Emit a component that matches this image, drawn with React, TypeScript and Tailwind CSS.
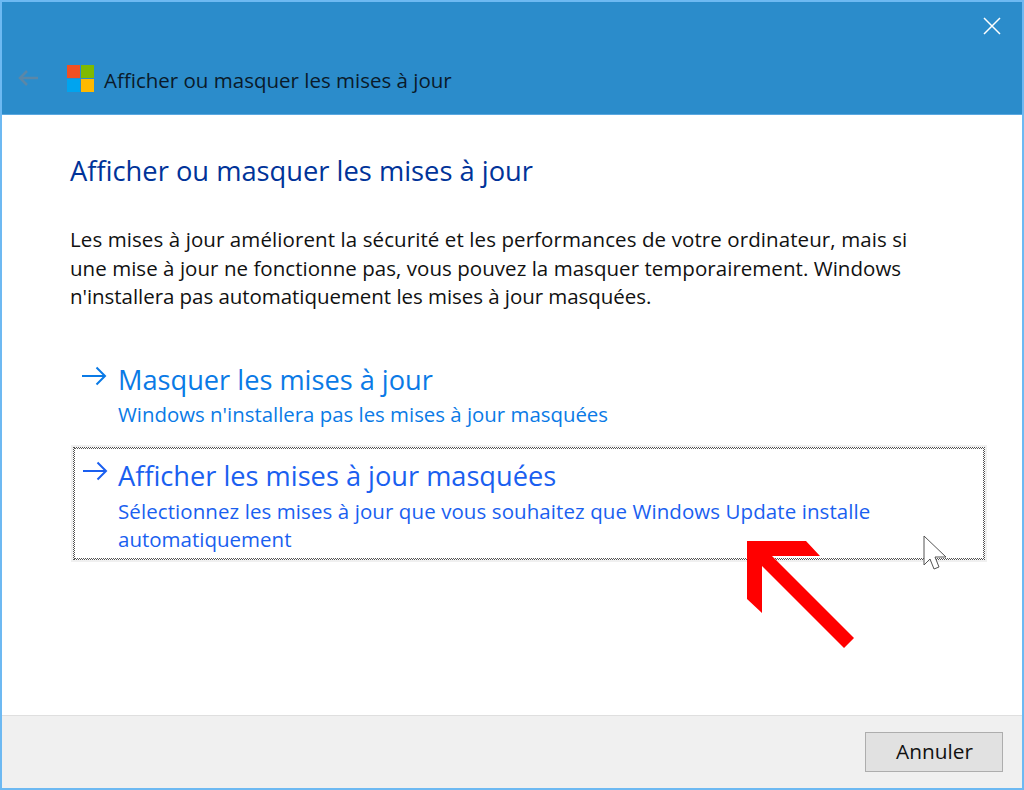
const font = "font-['Open_Sans','Noto_Sans',sans-serif]";

function LinkArrow({ className }: { className: string }) {
  return (
    <svg width="26" height="20" viewBox="0 0 26 20" fill="none" stroke="currentColor" strokeWidth="2" className={className}>
      <path d="M1 10h23M15.500 1.500 24 10l-8.500 8.500" />
    </svg>
  );
}

function WindowsLogo() {
  return (
    <div className="grid h-[27px] w-[27px] grid-cols-2 gap-[1px]">
      <div className="bg-[#f25022]" />
      <div className="bg-[#7fba00]" />
      <div className="bg-[#00a4ef]" />
      <div className="bg-[#ffb900]" />
    </div>
  );
}

export default function App() {
  return (
    <div className={`${font} relative flex h-[790px] w-[1024px] flex-col overflow-hidden border-2 border-[#6db9f2] bg-white`}>
      {/* Title bar */}
      <div className="relative flex h-[113px] shrink-0 items-start border-b border-[#5ba8e0] bg-[#2b8ccb] pl-[15px] pt-[63px]">
        <svg width="22" height="18" viewBox="0 0 22 18" fill="none" stroke="#5a87a8" strokeWidth="2.500" className="mt-[4px]">
          <path d="M21 9H3M10 2 3 9l7 7" />
        </svg>
        <div className="ml-[28px]"><WindowsLogo /></div>
        <span className="ml-[10px] mt-[2px] whitespace-nowrap text-[20.500px] leading-[27px] text-[#0a1a2a]">Afficher ou masquer les mises à jour</span>
        <svg width="18" height="18" viewBox="0 0 18 18" stroke="#ffffff" strokeWidth="1.500" className="absolute right-[21px] top-[15px]">
          <path d="M1 1l16 16M17 1 1 17" />
        </svg>
      </div>

      {/* Content */}
      <div className="flex flex-1 flex-col pl-[68px] pr-[36px] pt-[38px]">
        <h1 className="whitespace-nowrap text-[27.300px] leading-[36px] font-normal text-[#003399]">Afficher ou masquer les mises à jour</h1>
        <p className="mt-[36px] text-[20.500px] leading-[28.500px] text-[#111111]">
          <span className="block whitespace-nowrap tracking-[0.090px]">Les mises à jour améliorent la sécurité et les performances de votre ordinateur, mais si</span>
          <span className="block whitespace-nowrap tracking-[0.040px]">une mise à jour ne fonctionne pas, vous pouvez la masquer temporairement. Windows</span>
          <span className="block whitespace-nowrap tracking-[-0.050px]">n'installera pas automatiquement les mises à jour masquées.</span>
        </p>

        <div className="mt-[51px] flex pl-[11px] text-[#0a7ae6]">
          <LinkArrow className="mt-[4px] shrink-0" />
          <div className="ml-[11px]">
            <div className="whitespace-nowrap text-[27.200px] leading-[36px]">Masquer les mises à jour</div>
            <div className="mt-[2px] whitespace-nowrap text-[20.400px] leading-[28px]">Windows n'installera pas les mises à jour masquées</div>
          </div>
        </div>

        {/* Focus box: two nested 1px dotted borders give the dithered line */}
        <div className="ml-[1px] mt-[17px] w-[916px] border-2 border-[#f0f0f0]">
          <div className="border border-dotted border-[#555555]">
            <div className="flex h-[111px] border border-dotted border-[#555555] pl-[7px] pt-[9px] text-[#1a5ff0]">
              <LinkArrow className="mt-[3px] shrink-0" />
              <div className="ml-[10px]">
                <div className="whitespace-nowrap text-[27.200px] leading-[36px]">Afficher les mises à jour masquées</div>
                <div className="mt-[3px] text-[20.500px] leading-[28px]">
                  <span className="block whitespace-nowrap tracking-[0.080px]">Sélectionnez les mises à jour que vous souhaitez que Windows Update installe</span>
                  <span className="block whitespace-nowrap">automatiquement</span>
                </div>
              </div>
            </div>
          </div>
        </div>
      </div>

      {/* Footer */}
      <div className="flex h-[73px] shrink-0 items-start justify-end border-t border-[#dfdfdf] bg-[#f0f0f0] pr-[19px] pt-[16px]">
        <button className="h-[40px] w-[138px] border border-[#adadad] bg-[#e1e1e1] pl-[1px] text-[20.800px] text-[#111111]">Annuler</button>
      </div>

      {/* Red annotation arrow */}
      <svg width="110" height="110" viewBox="0 0 110 110" className="absolute left-[745px] top-[538px]">
        <path d="M0 1h59l14 15H25l82 82-10 10-82-82v47L0 59z" fill="#ff0000" />
      </svg>

      {/* Mouse cursor */}
      <svg width="24" height="36" viewBox="0 0 24 36" className="absolute left-[921px] top-[533px]">
        <path d="M1 1v29l6-6 4 10 5-2-4-10h11z" fill="#ffffff" stroke="#555555" strokeWidth="1" />
      </svg>
    </div>
  );
}
